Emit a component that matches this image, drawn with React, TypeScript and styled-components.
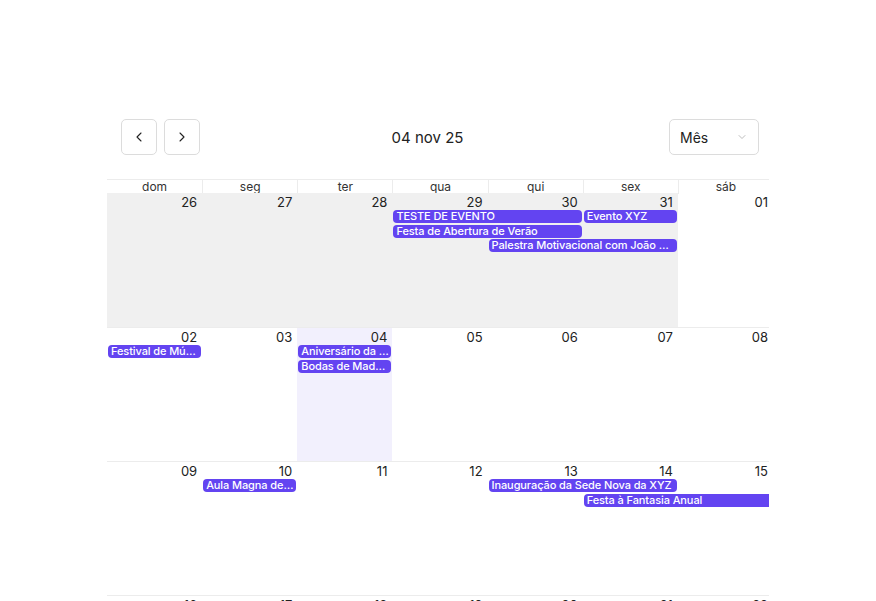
import React from "react";
import styled, { createGlobalStyle } from "styled-components";

const Global = createGlobalStyle`
  html, body { margin: 0; padding: 0; background: #fff; overflow: hidden; }
  body { font-family: Inter, "Noto Sans", "Liberation Sans", sans-serif; color: #222; }
`;

const Page = styled.div`
  width: 662px;
  margin: 119px auto 0;
`;

const Toolbar = styled.div`
  display: flex;
  align-items: center;
  height: 36px;
  padding: 0 10px 0 14px;
  margin-bottom: 24px;
`;

const NavGroup = styled.div`
  display: flex;
  gap: 7px;
`;

const NavButton = styled.button`
  width: 36px;
  height: 36px;
  box-sizing: border-box;
  border: 1px solid #dcdcdc;
  border-radius: 5px;
  background: #fff;
  display: flex;
  align-items: center;
  justify-content: center;
  padding: 0;
  color: #222;
`;

const Title = styled.div`
  flex: 1;
  text-align: center;
  font-size: 15px;
  padding-right: 14px;
  color: #222;
`;

const Select = styled.div`
  width: 90px;
  height: 36px;
  box-sizing: border-box;
  border: 1px solid #dcdcdc;
  border-radius: 5px;
  display: flex;
  align-items: center;
  justify-content: space-between;
  padding: 0 10px 0 10px;
  font-size: 14px;
  color: #222;
`;

const Viewport = styled.div`
  overflow: hidden;
`;

const Month = styled.div`
  width: 666px;
`;

const HeaderRow = styled.div`
  display: grid;
  grid-template-columns: repeat(7, 1fr);
  border-top: 1px solid #ececec;
  height: 14px;
  box-sizing: border-box;
`;

const HeaderCell = styled.div<{ $first?: boolean }>`
  font-size: 12px;
  line-height: 14px;
  text-align: center;
  color: #333;
  border-left: ${(p) => (p.$first ? "none" : "1px solid #ececec")};
`;

const Week = styled.div<{ $first?: boolean }>`
  display: grid;
  grid-template-columns: repeat(7, 1fr);
  grid-template-rows: 17px 14.5px 14.5px 14.5px 1fr;
  height: 134px;
  box-sizing: border-box;
  border-top: ${(p) => (p.$first ? "none" : "1px solid #ececec")};
`;

const CellBg = styled.div<{ $col: number; $kind: "off" | "today" | "normal" }>`
  grid-column: ${(p) => p.$col};
  grid-row: 1 / 6;
  background: ${(p) =>
    p.$kind === "off" ? "#f0f0f0" : p.$kind === "today" ? "#f2f0fd" : "transparent"};
`;

const DateNum = styled.div<{ $col: number }>`
  grid-column: ${(p) => p.$col};
  grid-row: 1;
  text-align: right;
  padding: 2px 5px 0 0;
  font-size: 13px;
  line-height: 15px;
  color: #222;
  z-index: 1;
`;

const EventBar = styled.div<{ $start: number; $span: number; $row: number; $cont?: boolean }>`
  grid-column: ${(p) => `${p.$start} / span ${p.$span}`};
  grid-row: ${(p) => p.$row + 1};
  z-index: 1;
  height: 13px;
  margin: 0 ${(p) => (p.$cont ? "0" : "1px")} 0 1px;
  background: #6344f1;
  border-radius: ${(p) => (p.$cont ? "4px 0 0 4px" : "4px")};
  color: #fff;
  font-size: 11px;
  font-weight: 500;
  letter-spacing: -0.1px;
  line-height: 13px;
  padding: 0 2px 0 3px;
  white-space: nowrap;
  overflow: hidden;
  text-overflow: ellipsis;
  box-sizing: border-box;
  min-width: 0;
`;

type Ev = { title: string; start: number; span: number; row: number; cont?: boolean };
type WeekData = { days: { n: string; off?: boolean; today?: boolean }[]; events: Ev[] };

const pad = (n: number) => (n < 10 ? "0" + n : String(n));

const weeks: WeekData[] = [
  {
    days: [26, 27, 28, 29, 30, 31].map((d) => ({ n: String(d), off: true })).concat([{ n: "01" }]),
    events: [
      { title: "TESTE DE EVENTO", start: 4, span: 2, row: 1 },
      { title: "Evento XYZ", start: 6, span: 1, row: 1 },
      { title: "Festa de Abertura de Verão", start: 4, span: 2, row: 2 },
      { title: "Palestra Motivacional com João Silva", start: 5, span: 2, row: 3 },
    ],
  },
  {
    days: [2, 3, 4, 5, 6, 7, 8].map((d) => ({ n: pad(d), today: d === 4 })),
    events: [
      { title: "Festival de Música", start: 1, span: 1, row: 1 },
      { title: "Aniversário da Empresa", start: 3, span: 1, row: 1 },
      { title: "Bodas de Madeira", start: 3, span: 1, row: 2 },
    ],
  },
  {
    days: [9, 10, 11, 12, 13, 14, 15].map((d) => ({ n: pad(d) })),
    events: [
      { title: "Aula Magna de Abertura", start: 2, span: 1, row: 1 },
      { title: "Inauguração da Sede Nova da XYZ", start: 5, span: 2, row: 1 },
      { title: "Festa à Fantasia Anual", start: 6, span: 2, row: 2, cont: true },
    ],
  },
  {
    days: [16, 17, 18, 19, 20, 21, 22].map((d) => ({ n: pad(d) })),
    events: [{ title: "Festa à Fantasia Anual", start: 1, span: 1, row: 1 }],
  },
  {
    days: [23, 24, 25, 26, 27, 28, 29].map((d) => ({ n: pad(d) })),
    events: [],
  },
];

const dayNames = ["dom", "seg", "ter", "qua", "qui", "sex", "sáb"];

const ChevronLeft = () => (
  <svg width="16" height="16" viewBox="0 0 24 24" fill="none" stroke="currentColor" strokeWidth="1.6" strokeLinecap="round" strokeLinejoin="round">
    <path d="M15 18l-6-6 6-6" />
  </svg>
);
const ChevronRight = () => (
  <svg width="16" height="16" viewBox="0 0 24 24" fill="none" stroke="currentColor" strokeWidth="1.6" strokeLinecap="round" strokeLinejoin="round">
    <path d="M9 18l6-6-6-6" />
  </svg>
);
const ChevronDown = () => (
  <svg width="12" height="12" viewBox="0 0 24 24" fill="none" stroke="#b5b5b5" strokeWidth="1.8" strokeLinecap="round" strokeLinejoin="round">
    <path d="M6 9l6 6 6-6" />
  </svg>
);

export default function App() {
  return (
    <>
      <Global />
      <Page>
        <Toolbar>
          <NavGroup>
            <NavButton aria-label="anterior"><ChevronLeft /></NavButton>
            <NavButton aria-label="próximo"><ChevronRight /></NavButton>
          </NavGroup>
          <Title>04 nov 25</Title>
          <Select>
            <span>Mês</span>
            <ChevronDown />
          </Select>
        </Toolbar>
        <Viewport>
          <Month>
            <HeaderRow>
              {dayNames.map((d, i) => (
                <HeaderCell key={d} $first={i === 0}>{d}</HeaderCell>
              ))}
            </HeaderRow>
            {weeks.map((w, wi) => (
              <Week key={wi} $first={wi === 0}>
                {w.days.map((d, i) => (
                  <CellBg key={"bg" + i} $col={i + 1} $kind={d.off ? "off" : d.today ? "today" : "normal"} />
                ))}
                {w.days.map((d, i) => (
                  <DateNum key={"n" + i} $col={i + 1}>{d.n}</DateNum>
                ))}
                {w.events.map((e, ei) => (
                  <EventBar key={"e" + ei} $start={e.start} $span={e.span} $row={e.row} $cont={e.cont}>
                    {e.title}
                  </EventBar>
                ))}
              </Week>
            ))}
          </Month>
        </Viewport>
      </Page>
    </>
  );
}
